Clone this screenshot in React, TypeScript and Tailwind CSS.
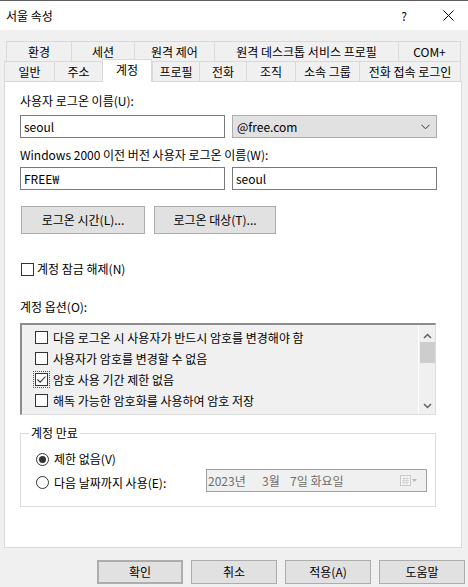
import React from "react";

type Tab = { label: string; w: string; active?: boolean };

const topTabs: Tab[] = [
  { label: "환경", w: "w-[65px]" },
  { label: "세션", w: "w-[63px]" },
  { label: "원격 제어", w: "w-[80px]" },
  { label: "원격 데스크톱 서비스 프로필", w: "w-[184px]" },
  { label: "COM+", w: "w-[63px]" },
];

const bottomTabs: Tab[] = [
  { label: "일반", w: "w-[50px]" },
  { label: "주소", w: "w-[48px]" },
  { label: "계정", w: "w-[50px]", active: true },
  { label: "프로필", w: "w-[47px]" },
  { label: "전화", w: "w-[47px]" },
  { label: "조직", w: "w-[49px]" },
  { label: "소속 그룹", w: "w-[64px]" },
  { label: "전화 접속 로그인", w: "w-[102px]" },
];

const options = [
  { label: "다음 로그온 시 사용자가 반드시 암호를 변경해야 함", checked: false },
  { label: "사용자가 암호를 변경할 수 없음", checked: false },
  { label: "암호 사용 기간 제한 없음", checked: true, focus: true },
  { label: "해독 가능한 암호화를 사용하여 암호 저장", checked: false },
];

// small win32-ish checkbox
const CheckBox = ({ checked }: { checked?: boolean }) => (
  <span className="w-[13px] h-[13px] border border-[#333333] bg-white flex items-center justify-center shrink-0">
    {checked && (
      <svg width="11" height="11" viewBox="0 0 11 11">
        <path d="M1.5 5.5 L4.2 8.2 L9.5 2.5" fill="none" stroke="#333333" strokeWidth="1.1" />
      </svg>
    )}
  </span>
);

const Radio = ({ checked }: { checked?: boolean }) => (
  <span className="w-[13px] h-[13px] rounded-full border border-[#333333] bg-white flex items-center justify-center shrink-0">
    {checked && <span className="w-[7px] h-[7px] rounded-full bg-[#333333]" />}
  </span>
);

const Button = ({ label, className = "" }: { label: string; className?: string }) => (
  <button className={`bg-[#e1e1e1] border border-[#adadad] flex items-center justify-center text-black ${className}`}>
    {label}
  </button>
);

export default function App() {
  return (
    <div className="w-[468px] h-[587px] overflow-hidden bg-[#f0f0f0] text-[12px] leading-[16px] text-black font-['Noto_Sans_CJK_KR',sans-serif]">
      {/* title bar */}
      <div className="h-[30px] bg-white border-t border-[#5f5f5f] flex items-center pl-[6px]">
        <span className="flex-1">서울 속성</span>
        <span className="w-[12px] text-center mr-[33px]">?</span>
        <svg width="11" height="11" viewBox="0 0 11 11" className="mr-[14px]">
          <path d="M0.5 0.5 L10.5 10.5 M10.5 0.5 L0.5 10.5" stroke="#000" strokeWidth="1" />
        </svg>
      </div>

      {/* tabs */}
      <div className="pt-[11px]">
        <div className="flex h-[20px] pl-[6px]">
          {topTabs.map((t, i) => (
            <div
              key={i}
              className={`${t.w} h-[20px] border-t border-l border-[#d9d9d9] flex items-center justify-center whitespace-nowrap ${
                i === topTabs.length - 1 ? "border-r" : ""
              }`}
            >
              {t.label}
            </div>
          ))}
        </div>
        <div className="flex items-end h-[20px] pl-[4px]">
          {bottomTabs.map((t, i) =>
            t.active ? (
              <div
                key={i}
                className={`${t.w} h-[23px] -mb-[1px] relative z-10 bg-white border-t border-l border-r border-[#d9d9d9] flex items-center justify-center pb-[3px]`}
              >
                {t.label}
              </div>
            ) : (
              <div
                key={i}
                className={`${t.w} h-[20px] border-t border-l border-[#d9d9d9] flex items-center justify-center whitespace-nowrap ${
                  i === bottomTabs.length - 1 ? "border-r" : ""
                }`}
              >
                {t.label}
              </div>
            )
          )}
        </div>
      </div>

      {/* panel */}
      <div className="ml-[4px] w-[458px] h-[467px] bg-white border border-[#d9d9d9] pl-[15px]">
        <div className="mt-[11px]">사용자 로그온 이름(U):</div>
        <div className="flex gap-[7px] mt-[6px]">
          <div className="w-[205px] h-[23px] border border-[#7a7a7a] bg-white flex items-center pl-[3px]">seoul</div>
          <div className="w-[205px] h-[23px] border border-[#adadad] bg-[#e1e1e1] flex items-center pl-[4px] pr-[6px]">
            <span className="flex-1">@free.com</span>
            <svg width="9" height="6" viewBox="0 0 9 6">
              <path d="M0.5 0.8 L4.5 4.8 L8.5 0.8" fill="none" stroke="#333" strokeWidth="1" />
            </svg>
          </div>
        </div>

        <div className="mt-[9px]">Windows 2000 이전 버전 사용자 로그온 이름(W):</div>
        <div className="flex gap-[7px] mt-[4px]">
          <div className="w-[205px] h-[23px] border border-[#7a7a7a] bg-white flex items-center pl-[3px]">FREE₩</div>
          <div className="w-[205px] h-[23px] border border-[#7a7a7a] bg-white flex items-center pl-[3px]">seoul</div>
        </div>

        <div className="flex gap-[9px] mt-[16px] ml-[1px]">
          <Button label="로그온 시간(L)..." className="w-[124px] h-[28px]" />
          <Button label="로그온 대상(T)..." className="w-[122px] h-[28px]" />
        </div>

        <div className="flex items-center gap-[3px] mt-[27px] ml-[1px] h-[16px]">
          <CheckBox />
          <span>계정 잠금 해제(N)</span>
        </div>

        <div className="mt-[22px]">계정 옵션(O):</div>

        {/* options list */}
        <div className="mt-[8px] w-[416px] h-[92px] bg-[#f0f0f0] border-t-2 border-l-2 border-r border-b border-t-[#8c8c8c] border-l-[#8c8c8c] border-r-[#dcdcdc] border-b-[#dcdcdc] flex">
          <div className="flex-1 pt-[2px] pl-[13px]">
            {options.map((o, i) => (
              <div key={i} className="h-[21px] flex items-center gap-[5px]">
                {o.focus ? (
                  <span className="w-[17px] h-[17px] -mx-[2px] border border-dotted border-[#555] flex items-center justify-center shrink-0">
                    <CheckBox checked={o.checked} />
                  </span>
                ) : (
                  <CheckBox checked={o.checked} />
                )}
                <span className="whitespace-nowrap">{o.label}</span>
              </div>
            ))}
          </div>
          <div className="w-[17px] h-full border-l border-white flex flex-col items-center">
            <svg width="9" height="6" viewBox="0 0 9 6" className="mt-[8px]">
              <path d="M1 5 L4.5 1.5 L8 5" fill="none" stroke="#606060" strokeWidth="1.5" />
            </svg>
            <div className="w-[15px] h-[21px] bg-[#cdcdcd] mt-[3px]" />
            <div className="flex-1" />
            <svg width="9" height="6" viewBox="0 0 9 6" className="mb-[5px]">
              <path d="M1 1 L4.5 4.5 L8 1" fill="none" stroke="#606060" strokeWidth="1.5" />
            </svg>
          </div>
        </div>

        {/* expiry group */}
        <fieldset className="mt-[10px] w-[416px] border border-[#dcdcdc] pb-[14px]">
          <legend className="ml-[8px] px-[2px]">계정 만료</legend>
          <div className="flex items-center gap-[5px] mt-[10px] ml-[15px] h-[16px]">
            <Radio checked />
            <span>제한 없음(V)</span>
          </div>
          <div className="flex items-center mt-[2px] ml-[15px] h-[23px]">
            <div className="flex items-center gap-[5px] pt-[4px] w-[170px]">
              <Radio />
              <span>다음 날짜까지 사용(E):</span>
            </div>
            <div className="w-[221px] h-[23px] border border-[#a0a0a0] bg-[#f0f0f0] flex items-center pl-[1px] pr-[8px] text-[#6d6d6d]">
              <span className="w-[54px]">2023년</span>
              <span className="w-[28px]">3월</span>
              <span className="flex-1">7일 화요일</span>
              <svg width="18" height="11" viewBox="0 0 18 11">
                <rect x="0.5" y="0.5" width="10" height="10" fill="#f7f7f7" stroke="#c8c8c8" />
                <path d="M2 3.5 H9 M2 5.5 H9 M2 7.5 H9 M4 2 V9.5 M7 2 V9.5" stroke="#d4d4d4" strokeWidth="1" />
                <path d="M12 4 L17 4 L14.5 7 Z" fill="#b8b8b8" />
              </svg>
            </div>
          </div>
        </fieldset>
      </div>

      {/* dialog buttons */}
      <div className="flex justify-end mt-[12px] pr-[3px] gap-[8px]">
        <Button label="확인" className="w-[86px] h-[24px] border-2 border-[#0078d7]" />
        <Button label="취소" className="w-[86px] h-[24px]" />
        <Button label="적용(A)" className="w-[86px] h-[24px]" />
        <Button label="도움말" className="w-[86px] h-[24px]" />
      </div>
    </div>
  );
}
